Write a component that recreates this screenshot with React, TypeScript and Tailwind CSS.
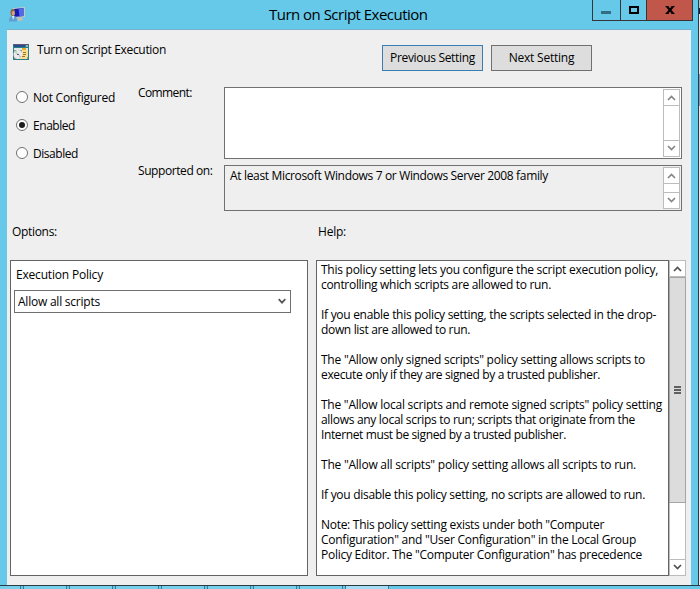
import type { ReactNode } from "react";

function Chevron({ down = false, color = "#858585" }: { down?: boolean; color?: string }) {
  return (
    <svg width="9" height="6" viewBox="0 0 9 6" fill="none" className="block">
      <path d={down ? "M1 1L4.5 4.5L8 1" : "M1 5L4.5 1.5L8 5"} stroke={color} strokeWidth="1.7" />
    </svg>
  );
}

function SmallScrollbar() {
  return (
    <div className="flex w-[17px] flex-col justify-between border border-[#bcbcbc] bg-white">
      <div className="flex h-4 items-center justify-center border-b border-[#bcbcbc] pt-px"><Chevron /></div>
      <div className="flex h-4 items-center justify-center border-t border-[#bcbcbc] pb-px"><Chevron down /></div>
    </div>
  );
}

function Radio({ checked = false, children }: { checked?: boolean; children: ReactNode }) {
  return (
    <div className="flex h-7 items-center">
      <span className="flex size-3 items-center justify-center rounded-full border border-[#707070] bg-white">
        {checked && <span className="size-1.5 rounded-full bg-[#1c1c1c]" />}
      </span>
      <span className="ml-[5px]">{children}</span>
    </div>
  );
}

function UserComputerIcon() {
  return (
    <svg width="16" height="16" viewBox="0 0 16 16" className="block">
      <path d="M4 1L16 0V10L4 11Z" fill="#c9c8bd" />
      <path d="M5 2L14.5 1V9L5 10Z" fill="#1519b4" />
      <path d="M9.5 1.5L14.5 1V9L10.5 9.4Z" fill="#5269e8" />
      <path d="M8 11L13 10V12L15 13L9 14Z" fill="#c8bfae" />
      <path d="M0 14.5C0 10 2 8.5 4 8.5C6 8.5 8 10 8 14.5Z" fill="#5e9ed4" />
      <path d="M3 9L4.2 13L5.2 9Z" fill="#e9f5fb" />
      <ellipse cx="3.8" cy="5.5" rx="2.3" ry="3.4" fill="#8f6542" />
      <ellipse cx="4.3" cy="6.3" rx="1.5" ry="2.3" fill="#d7a37a" />
    </svg>
  );
}

function PolicyIcon() {
  return (
    <svg width="16" height="16" viewBox="0 0 16 16" className="block" shapeRendering="crispEdges">
      <path d="M0 0H16V16H0Z" fill="#287f88" />
      <path d="M0 0H16V1H0Z" fill="#60567c" />
      <path d="M1 1H12V3H1Z" fill="#284d87" />
      <path d="M13 1H15V3H13Z" fill="#8fb5bb" />
      <path d="M1 4H15V6H1Z" fill="#e2e7e7" />
      <path d="M1 6H15V15H1Z" fill="#899c95" />
      <path d="M9 4H13V6H9Z" fill="#e8ac25" />
      <circle cx="5" cy="10.5" r="4.5" fill="#ece9ed" shapeRendering="auto" />
      <path d="M5 10.5L1 8L3 6.5Z" fill="#b8d9bb" />
      <path d="M5 10.5L9 13L7 14.5Z" fill="#cbb9d5" />
      <circle cx="5" cy="10.5" r="1" fill="#565965" />
      <path d="M9 6H15V13H14V15H7V13H9Z" fill="#f7df93" />
      <path d="M10 8H13V9H10ZM10 10H13V11H10ZM9 12H12V13H9Z" fill="#987333" />
    </svg>
  );
}

const helpLines: [string, string][] = [
  ["This policy setting lets you configure the script execution policy,", "tracking-[-0.253px]"],
  ["controlling which scripts are allowed to run.", "tracking-[-0.308px]"],
  ["", ""],
  ["If you enable this policy setting, the scripts selected in the drop-", "tracking-[-0.291px]"],
  ["down list are allowed to run.", "tracking-[-0.337px]"],
  ["", ""],
  ['The "Allow only signed scripts" policy setting allows scripts to', "tracking-[-0.235px]"],
  ["execute only if they are signed by a trusted publisher.", "tracking-[-0.357px]"],
  ["", ""],
  ['The "Allow local scripts and remote signed scripts" policy setting', "tracking-[-0.243px]"],
  ["allows any local scrips to run; scripts that originate from the", "tracking-[-0.307px]"],
  ["Internet must be signed by a trusted publisher.", "tracking-[-0.376px]"],
  ["", ""],
  ['The "Allow all scripts" policy setting allows all scripts to run.', "tracking-[-0.232px]"],
  ["", ""],
  ["If you disable this policy setting, no scripts are allowed to run.", "tracking-[-0.29px]"],
  ["", ""],
  ['Note: This policy setting exists under both "Computer', "tracking-[-0.287px]"],
  ['Configuration" and "User Configuration" in the Local Group', "tracking-[-0.258px]"],
  ['Policy Editor. The "Computer Configuration" has precedence', "tracking-[-0.259px]"],
];

function TitleBar() {
  return (
    <header className="flex h-[29px] w-[686px]">
      <div className="w-[262px] pt-[7px] pl-[2px]"><UserComputerIcon /></div>
      <h1 className="w-[323px] pt-[4px] text-[15px] leading-5 tracking-[-0.52px]">Turn on Script Execution</h1>
      <div className="flex h-[21px] w-[101px] shrink-0 border-r border-b border-l border-[#353535]">
        <div className="flex w-[28px] items-end justify-center border-r border-[#353535] pb-[6px] pr-px"><span className="h-[3px] w-[10px] bg-[#336d80]" /></div>
        <div className="flex w-[26px] items-center justify-center border-r border-[#353535]"><span className="h-2 w-[10px] border-2 border-black" /></div>
        <div className="flex flex-1 items-center justify-center bg-[#c1564b]">
          <svg width="10" height="8" viewBox="0 0 10 8"><path d="M1.6 0L8.4 8M8.4 0L1.6 8" stroke="#000" strokeWidth="2.2" /><path d="M0.5 0.5H3.5M6.5 0.5H9.5M0.5 7.5H3.5M6.5 7.5H9.5" stroke="#000" /></svg>
        </div>
      </div>
    </header>
  );
}

function HelpScrollbar() {
  return (
    <div className="flex w-[17px] flex-col bg-white">
      <div className="flex h-[17px] items-center justify-center border border-[#bcbcbc] pt-px"><Chevron color="#505050" /></div>
      <div className="flex h-[226px] flex-col items-center justify-center gap-px border border-[#a5a5a5] bg-[#dcdcdc]">
        <span className="h-0.5 w-[7px] bg-[#606060]" />
        <span className="h-0.5 w-[7px] bg-[#606060]" />
        <span className="h-0.5 w-[7px] bg-[#606060]" />
      </div>
      <div className="flex-1 border-x border-[#bcbcbc]" />
      <div className="flex h-[17px] items-center justify-center border border-[#bcbcbc] pb-px"><Chevron down color="#505050" /></div>
    </div>
  );
}

export default function App() {
  return (
    <div className="h-[589px] w-[700px] overflow-hidden bg-[#66c9e9] font-['Open_Sans','Noto_Sans',sans-serif] text-xs leading-[15px] text-black">
      <div className="flex h-[585px]">
        <div className="w-[698px] px-[7px]">
          <TitleBar />
          <main className="h-[556px] border-t border-[#74b3cb] bg-[#efefef]">
            <div className="flex h-[57px]">
              <div className="w-[30px] pt-[14px] pl-[6px]"><PolicyIcon /></div>
              <div className="w-[345px] pt-[12px] tracking-[-0.322px]">Turn on Script Execution</div>
              <div className="flex gap-2 pt-[15px]">
                <button className="h-[26px] w-[101px] border border-[#397eb3] bg-[#dddddd] pb-0.5 tracking-[-0.317px]">Previous Setting</button>
                <button className="h-[26px] w-[101px] border border-[#707070] bg-[#dddddd] pb-0.5 tracking-[-0.22px]">Next Setting</button>
              </div>
            </div>

            <div className="flex h-[124px]">
              <div className="-mt-1 w-[131px] pl-[9px]">
                <Radio><span className="tracking-[-0.266px]">Not Configured</span></Radio>
                <Radio checked><span className="tracking-[-0.451px]">Enabled</span></Radio>
                <Radio><span className="tracking-[-0.447px]">Disabled</span></Radio>
              </div>
              <div className="grid grid-cols-[86px_458px] grid-rows-[72px_46px] gap-y-[6px]">
                <div className="-mt-0.5 tracking-[-0.6px]">Comment:</div>
                <div className="flex justify-end border border-[#707070] bg-white p-px"><SmallScrollbar /></div>
                <div className="-mt-0.5 tracking-[-0.42px]">Supported on:</div>
                <div className="flex justify-between border border-[#707070] p-px">
                  <span className="pt-px pl-1 tracking-[-0.338px]">At least Microsoft Windows 7 or Windows Server 2008 family</span>
                  <SmallScrollbar />
                </div>
              </div>
            </div>

            <div className="flex h-[49px] pt-[13px] pl-[5px]">
              <div className="w-[306px] tracking-[-0.32px]">Options:</div>
              <div className="tracking-[-0.222px]">Help:</div>
            </div>

            <div className="flex h-[316px] gap-2 pl-[3px]">
              <section className="w-[298px] border border-[#646464] bg-white pt-1.5 pl-[3px]">
                <div className="pl-0.5 tracking-[-0.191px]">Execution Policy</div>
                <div className="mt-[8px] flex h-[23px] w-[277px] items-center justify-between border border-[#707070] pr-1 pl-[3px]">
                  <span className="tracking-[-0.228px]">Allow all scripts</span>
                  <svg width="8" height="7" viewBox="0 0 8 7"><path d="M0.7 1.2L4 4.7L7.3 1.2" fill="none" stroke="#555" strokeWidth="1.7" /></svg>
                </div>
              </section>
              <section className="flex">
                <div className="w-[353px] border border-[#646464] bg-white pt-px pl-1">
                  {helpLines.map(([line, tracking], i) => (
                    <p key={i} className={`h-[15px] whitespace-nowrap ${tracking}`}>{line}</p>
                  ))}
                </div>
                <HelpScrollbar />
              </section>
            </div>
          </main>
        </div>
        <div className="w-px bg-[#303a40]" />
        <div className="w-px bg-[#e9ebed]">
          <div className="h-2 bg-[#a9cad5]" /><div className="h-1.5 bg-[#161a54]" />
          <div className="mt-[60px] h-8 bg-[#779bc9]" />
        </div>
      </div>
      <div className="h-px bg-[#293c44]" />
      <div className="flex h-[3px]">
        <div className="w-[21px] border-r border-[#397b94] bg-[#76cfeb]" />
        {[0, 1, 2, 3, 4, 5, 6].map((i) => (
          <div key={i} className="ml-[2px] w-[44px] border-x border-[#397b94] bg-[#76cfeb]" />
        ))}
        <div className="ml-[2px] w-[44px] border-x border-[#397b94] bg-[#a5dcf3]" />
      </div>
    </div>
  );
}
